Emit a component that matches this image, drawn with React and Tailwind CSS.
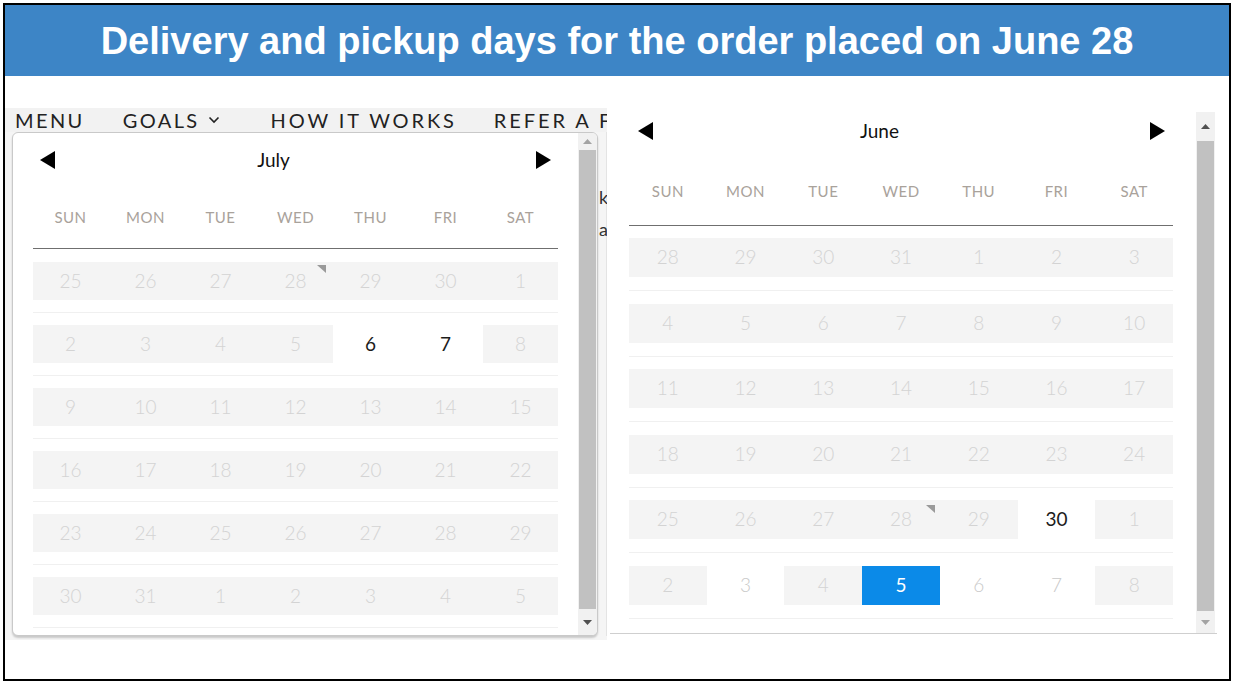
import React from "react";

const FONT = { fontFamily: "Lato, 'Noto Sans', sans-serif" };

function ArrowLeft() {
  return (
    <svg width="15" height="18" viewBox="0 0 15 18"><polygon points="15,0 15,18 0,9" fill="#000" /></svg>
  );
}
function ArrowRight() {
  return (
    <svg width="15" height="18" viewBox="0 0 15 18"><polygon points="0,0 0,18 15,9" fill="#000" /></svg>
  );
}

function Marker({ cls }) {
  return (
    <svg className={cls} width="9" height="8" viewBox="0 0 9 8"><polygon points="0,0 9,0 9,8" fill="#9a9a9a" /></svg>
  );
}

const DAYS = ["SUN", "MON", "TUE", "WED", "THU", "FRI", "SAT"];

// cell kinds: g = gray disabled, a = available dark, w = white light, s = selected
function Calendar({ month, rows, cellH, spacerTop, spacerBottom, big, headerMt, weekMt, divMt, rowsMt, markerCls }) {
  return (
    <div className="flex flex-col">
      <div className="flex items-center h-[26px]" style={{ marginTop: headerMt }}>
        <div className={big ? "ml-[9px]" : "ml-[7px]"}><ArrowLeft /></div>
        <div className="flex-1 text-center pr-[44px] text-[19px] text-[#111]" style={FONT}>{month}</div>
        <div className={big ? "mr-[8px]" : "mr-[7px]"}><ArrowRight /></div>
      </div>
      <div className="grid grid-cols-7 h-[20px] items-center" style={{ marginTop: weekMt }}>
        {DAYS.map((d) => (
          <div key={d} className="text-center text-[15px] tracking-[0.5px] text-[#a9a29b]" style={FONT}>{d}</div>
        ))}
      </div>
      <div className="h-px bg-[#6f6f6f]" style={{ marginTop: divMt }} />
      <div className="flex flex-col" style={{ marginTop: rowsMt }}>
        {rows.map((row, ri) => (
          <div key={ri} className="flex flex-col">
            <div className="grid grid-cols-7" style={{ height: cellH }}>
              {row.map(([n, k, m], ci) => (
                <div
                  key={ci}
                  className={
                    "relative flex items-center justify-center text-[19px] font-light " +
                    (k === "g"
                      ? "bg-[#f4f4f4] text-[#d3d3d3]"
                      : k === "a"
                      ? "bg-white text-[#1c1c1c] font-normal"
                      : k === "s"
                      ? "bg-[#0b8ae8] text-white font-normal"
                      : "bg-white text-[#c9c9c9]")
                  }
                  style={FONT}
                >
                  {n}
                  {m && <Marker cls={markerCls} />}
                </div>
              ))}
            </div>
            <div style={{ height: spacerTop }} />
            <div className="h-px bg-[#f0f0f0]" />
            <div style={{ height: spacerBottom }} />
          </div>
        ))}
      </div>
    </div>
  );
}

function Scrollbar({ topH, bottomH, topDark }) {
  return (
    <div className="flex flex-col w-[19px] h-full bg-[#f1f1f1]">
      <div className="flex items-center justify-center" style={{ height: topH }}>
        <svg width="9" height="5" viewBox="0 0 9 5"><polygon points="0,5 9,5 4.5,0" fill={topDark ? "#505050" : "#a3a3a3"} /></svg>
      </div>
      <div className="flex-1 mx-[1px] bg-[#c1c1c1]" />
      <div className="flex items-center justify-center" style={{ height: bottomH }}>
        <svg width="9" height="5" viewBox="0 0 9 5"><polygon points="0,0 9,0 4.5,5" fill={topDark ? "#a3a3a3" : "#505050"} /></svg>
      </div>
    </div>
  );
}

const julyRows = [
  [["25", "g"], ["26", "g"], ["27", "g"], ["28", "g", true], ["29", "g"], ["30", "g"], ["1", "g"]],
  [["2", "g"], ["3", "g"], ["4", "g"], ["5", "g"], ["6", "a"], ["7", "a"], ["8", "g"]],
  [["9", "g"], ["10", "g"], ["11", "g"], ["12", "g"], ["13", "g"], ["14", "g"], ["15", "g"]],
  [["16", "g"], ["17", "g"], ["18", "g"], ["19", "g"], ["20", "g"], ["21", "g"], ["22", "g"]],
  [["23", "g"], ["24", "g"], ["25", "g"], ["26", "g"], ["27", "g"], ["28", "g"], ["29", "g"]],
  [["30", "g"], ["31", "g"], ["1", "g"], ["2", "g"], ["3", "g"], ["4", "g"], ["5", "g"]],
];

const juneRows = [
  [["28", "g"], ["29", "g"], ["30", "g"], ["31", "g"], ["1", "g"], ["2", "g"], ["3", "g"]],
  [["4", "g"], ["5", "g"], ["6", "g"], ["7", "g"], ["8", "g"], ["9", "g"], ["10", "g"]],
  [["11", "g"], ["12", "g"], ["13", "g"], ["14", "g"], ["15", "g"], ["16", "g"], ["17", "g"]],
  [["18", "g"], ["19", "g"], ["20", "g"], ["21", "g"], ["22", "g"], ["23", "g"], ["24", "g"]],
  [["25", "g"], ["26", "g"], ["27", "g"], ["28", "g", true], ["29", "g"], ["30", "a"], ["1", "g"]],
  [["2", "g"], ["3", "w"], ["4", "g"], ["5", "s"], ["6", "w"], ["7", "w"], ["8", "g"]],
];

export default function App() {
  return (
    <div className="w-[1234px] h-[684px] bg-white p-[3px]">
      <div className="w-full h-full border-2 border-black flex flex-col">
        <div className="h-[71px] bg-[#3d85c6] flex items-center justify-center">
          <div className="text-white font-bold text-[38px] leading-none" style={{ fontFamily: "'Liberation Sans', Arial, sans-serif" }}>
            Delivery and pickup days for the order placed on June 28
          </div>
        </div>
        <div className="flex mt-[32px]">
          {/* left screenshot */}
          <div className="w-[602px] h-[532px] bg-[#f5f5f5] overflow-hidden flex flex-col">
            <div className="h-[24px] flex items-center whitespace-nowrap text-[20px] tracking-[2.4px] text-[#222] bg-[#f2f2f2]" style={FONT}>
              <span className="ml-[10px]">MENU</span>
              <span className="ml-[38px] flex items-center">GOALS
                <svg className="ml-[8px]" width="12" height="8" viewBox="0 0 12 8"><polyline points="1.5,1.5 6,6 10.5,1.5" fill="none" stroke="#222" strokeWidth="1.6" /></svg>
              </span>
              <span className="ml-[51px] tracking-[2.9px]">HOW IT WORKS</span>
              <span className="ml-[37px] tracking-[2.9px]">REFER A F</span>
            </div>
            <div className="flex">
              <div className="ml-[7px] w-[586px] h-[504px] bg-white border border-[#c9c9c9] rounded-[6px] shadow-[0_2px_2px_rgba(0,0,0,0.18)] flex overflow-hidden">
                <div className="ml-[20px] w-[525px]">
                  <Calendar
                    month="July"
                    rows={julyRows}
                    cellH={38}
                    spacerTop={12}
                    spacerBottom={12}
                    headerMt={14}
                    weekMt={33}
                    divMt={22}
                    rowsMt={13}
                    markerCls="absolute right-[7px] top-[3px]"
                  />
                </div>
                <div className="ml-[20px] h-full">
                  <Scrollbar topH={17} bottomH={26} topDark={false} />
                </div>
              </div>
              <div className="w-[9px] flex flex-col text-[18px] text-[#333] pl-[1px] border-r border-[#e4e4e4]" style={FONT}>
                <div className="mt-[56px] leading-none">k</div>
                <div className="mt-[14px] leading-none">a</div>
              </div>
            </div>
          </div>
          {/* right panel */}
          <div className="ml-[3px] mt-[2px] w-[607px] h-[524px] bg-white border-b border-[#cfcfcf] flex">
            <div className="ml-[19px] w-[544px]">
              <Calendar
                month="June"
                rows={juneRows}
                cellH={39}
                spacerTop={13}
                spacerBottom={12.5}
                big
                headerMt={8}
                weekMt={36}
                divMt={25}
                rowsMt={12}
                markerCls="absolute right-[5px] top-[5px]"
              />
            </div>
            <div className="ml-[23px] pt-[2px] h-full">
              <Scrollbar topH={29} bottomH={22} topDark={true} />
            </div>
          </div>
        </div>
      </div>
    </div>
  );
}
